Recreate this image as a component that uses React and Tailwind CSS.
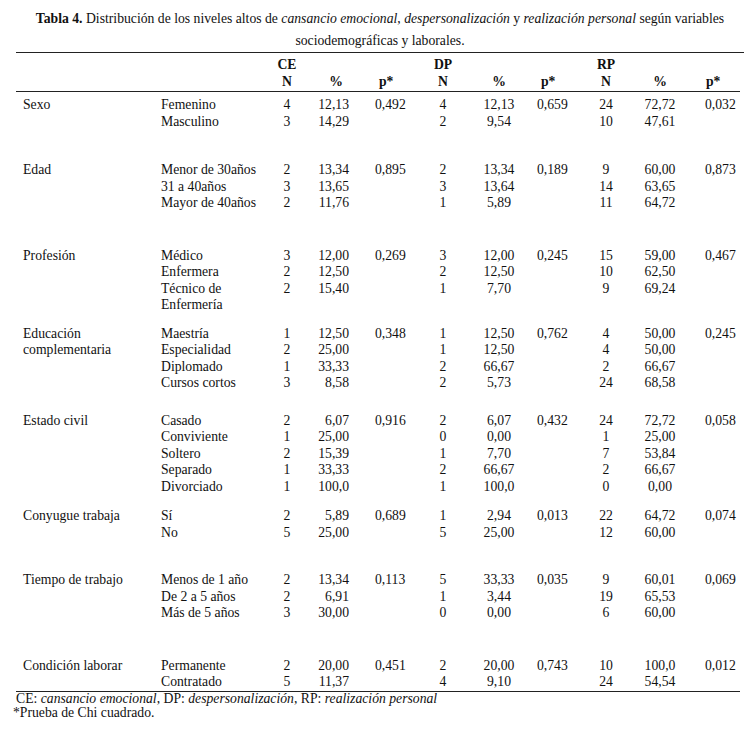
const groups = [
  {
    label: ['Sexo'],
    gap: 'mt-[5px]',
    rows: [
      ['Femenino', '4', '12,13', '0,492', '4', '12,13', '0,659', '24', '72,72', '0,032'],
      ['Masculino', '3', '14,29', '', '2', '9,54', '', '10', '47,61', ''],
    ],
  },
  {
    label: ['Edad'],
    gap: 'mt-[32px]',
    rows: [
      ['Menor de 30años', '2', '13,34', '0,895', '2', '13,34', '0,189', '9', '60,00', '0,873'],
      ['31 a 40años', '3', '13,65', '', '3', '13,64', '', '14', '63,65', ''],
      ['Mayor de 40años', '2', '11,76', '', '1', '5,89', '', '11', '64,72', ''],
    ],
  },
  {
    label: ['Profesión'],
    gap: 'mt-[36px]',
    rows: [
      ['Médico', '3', '12,00', '0,269', '3', '12,00', '0,245', '15', '59,00', '0,467'],
      ['Enfermera', '2', '12,50', '', '2', '12,50', '', '10', '62,50', ''],
      ['Técnico de', '2', '15,40', '', '1', '7,70', '', '9', '69,24', ''],
      ['Enfermería', '', '', '', '', '', '', '', '', ''],
    ],
  },
  {
    label: ['Educación', 'complementaria'],
    gap: 'mt-[12px]',
    rows: [
      ['Maestría', '1', '12,50', '0,348', '1', '12,50', '0,762', '4', '50,00', '0,245'],
      ['Especialidad', '2', '25,00', '', '1', '12,50', '', '4', '50,00', ''],
      ['Diplomado', '1', '33,33', '', '2', '66,67', '', '2', '66,67', ''],
      ['Cursos cortos', '3', '8,58', '', '2', '5,73', '', '24', '68,58', ''],
    ],
  },
  {
    label: ['Estado civil'],
    gap: 'mt-[21px]',
    rows: [
      ['Casado', '2', '6,07', '0,916', '2', '6,07', '0,432', '24', '72,72', '0,058'],
      ['Conviviente', '1', '25,00', '', '0', '0,00', '', '1', '25,00', ''],
      ['Soltero', '2', '15,39', '', '1', '7,70', '', '7', '53,84', ''],
      ['Separado', '1', '33,33', '', '2', '66,67', '', '2', '66,67', ''],
      ['Divorciado', '1', '100,0', '', '1', '100,0', '', '0', '0,00', ''],
    ],
  },
  {
    label: ['Conyugue trabaja'],
    gap: 'mt-[13px]',
    rows: [
      ['Sí', '2', '5,89', '0,689', '1', '2,94', '0,013', '22', '64,72', '0,074'],
      ['No', '5', '25,00', '', '5', '25,00', '', '12', '60,00', ''],
    ],
  },
  {
    label: ['Tiempo de trabajo'],
    gap: 'mt-[31px]',
    rows: [
      ['Menos de 1 año', '2', '13,34', '0,113', '5', '33,33', '0,035', '9', '60,01', '0,069'],
      ['De 2 a 5 años', '2', '6,91', '', '1', '3,44', '', '19', '65,53', ''],
      ['Más de 5 años', '3', '30,00', '', '0', '0,00', '', '6', '60,00', ''],
    ],
  },
  {
    label: ['Condición laborar'],
    gap: 'mt-[36px]',
    rows: [
      ['Permanente', '2', '20,00', '0,451', '2', '20,00', '0,743', '10', '100,0', '0,012'],
      ['Contratado', '5', '11,37', '', '4', '9,10', '', '24', '54,54', ''],
    ],
  },
];

const cols = 'grid grid-cols-[145px_107px_38px_44px_73px_40px_72px_51px_40px_68px_46px]';

const Row = ({ label, cells }) => (
  <div className={cols}>
    <div className="pl-[7px]">{label}</div>
    <div>{cells[0]}</div>
    <div className="text-center">{cells[1]}</div>
    <div className="text-right pr-[1px]">{cells[2]}</div>
    <div className="pl-[25px]">{cells[3]}</div>
    <div className="text-center">{cells[4]}</div>
    <div className="text-center">{cells[5]}</div>
    <div className="pl-[2px]">{cells[6]}</div>
    <div className="text-center">{cells[7]}</div>
    <div className="text-center">{cells[8]}</div>
    <div className="pl-[11px]">{cells[9]}</div>
  </div>
);

export default function App() {
  return (
    <div className="w-[744px] h-[732px] bg-white text-[#111] font-['Liberation_Serif',serif] text-[13.7px] leading-[16.5px]">
      <div className="ml-[16px] w-[728px]">
        <p className="pt-[8px] text-center leading-[22px] whitespace-nowrap">
          <b>Tabla 4.</b> Distribución de los niveles altos de <i>cansancio emocional</i>, <i>despersonalización</i> y{' '}
          <i>realización personal</i> según variables
          <br />
          sociodemográficas y laborales.
        </p>

        <div className="border-t border-[#222]" />

        <div className="mr-[4px] pt-[4px] pb-[1px] font-bold border-b border-[#222]">
          <div className={cols}>
            <div />
            <div />
            <div className="text-center">CE</div>
            <div />
            <div />
            <div className="text-center">DP</div>
            <div />
            <div />
            <div className="text-center">RP</div>
            <div />
            <div />
          </div>
          <div className={cols}>
            <div />
            <div />
            <div className="text-center">N</div>
            <div className="text-right pr-[7px]">%</div>
            <div className="pl-[29px]">p*</div>
            <div className="text-center">N</div>
            <div className="text-center">%</div>
            <div className="pl-[6px]">p*</div>
            <div className="text-center">N</div>
            <div className="text-center">%</div>
            <div className="pl-[12px]">p*</div>
          </div>
        </div>

        <div className="mr-[4px] border-b border-[#222]">
          {groups.map((g) => (
            <div key={g.label[0]} className={g.gap}>
              {g.rows.map((r, i) => (
                <Row key={i} label={g.label[i] || ''} cells={r} />
              ))}
            </div>
          ))}
        </div>
      </div>

      <div className="ml-[13px] leading-[14px]">
        <p className="pl-[3px]">
          CE: <i>cansancio emocional</i>, DP: <i>despersonalización</i>, RP: <i>realización personal</i>
        </p>
        <p>*Prueba de Chi cuadrado.</p>
      </div>
    </div>
  );
}
